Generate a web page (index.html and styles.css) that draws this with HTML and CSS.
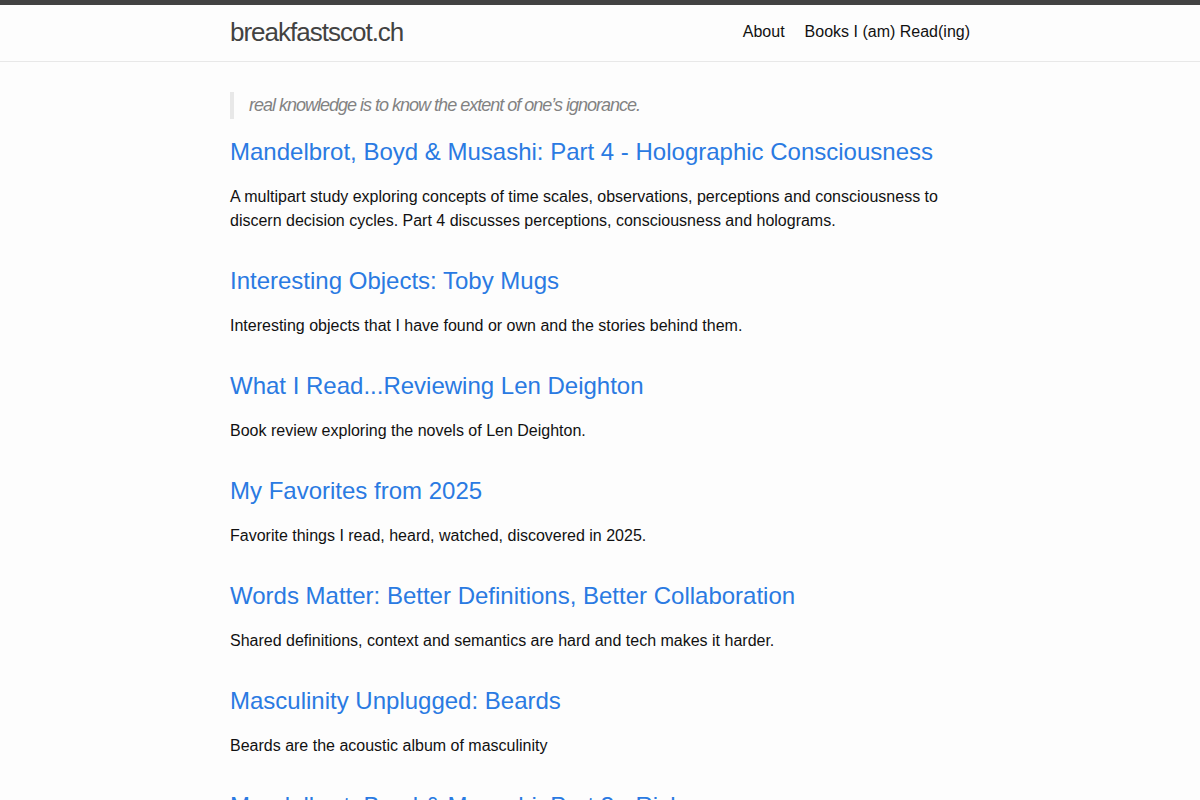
FILE: index.html
```html
<!DOCTYPE html>
<html lang="en">
<head>
    <meta charset="UTF-8">
    <title>breakfastscot.ch</title>
    <link rel="stylesheet" href="styles.css">
</head>
<body>
<header class="site-header">
    <div class="wrapper header-row">
        <a class="site-title" href="#">breakfastscot.ch</a>
        <nav class="site-nav">
            <a class="page-link" href="#">About</a>
            <a class="page-link" href="#">Books I (am) Read(ing)</a>
        </nav>
    </div>
</header>

<main class="page-content">
    <div class="wrapper">
        <blockquote>real knowledge is to know the extent of one’s ignorance.</blockquote>

        <ul class="post-list">
            <li>
                <h2><a class="post-link" href="#">Mandelbrot, Boyd &amp; Musashi: Part 4 - Holographic Consciousness</a></h2>
                <p>A multipart study exploring concepts of time scales, observations, perceptions and consciousness to discern decision cycles. Part 4 discusses perceptions, consciousness and holograms.</p>
            </li>
            <li>
                <h2><a class="post-link" href="#">Interesting Objects: Toby Mugs</a></h2>
                <p>Interesting objects that I have found or own and the stories behind them.</p>
            </li>
            <li>
                <h2><a class="post-link" href="#">What I Read...Reviewing Len Deighton</a></h2>
                <p>Book review exploring the novels of Len Deighton.</p>
            </li>
            <li>
                <h2><a class="post-link" href="#">My Favorites from 2025</a></h2>
                <p>Favorite things I read, heard, watched, discovered in 2025.</p>
            </li>
            <li>
                <h2><a class="post-link" href="#">Words Matter: Better Definitions, Better Collaboration</a></h2>
                <p>Shared definitions, context and semantics are hard and tech makes it harder.</p>
            </li>
            <li>
                <h2><a class="post-link" href="#">Masculinity Unplugged: Beards</a></h2>
                <p>Beards are the acoustic album of masculinity</p>
            </li>
            <li>
                <h2><a class="post-link" href="#">Mandelbrot, Boyd &amp; Musashi: Part 3 - Risk</a></h2>
                <p>A multipart study exploring concepts of time scales, observations, perceptions and consciousness to discern decision cycles. Part 3 discusses risk.</p>
            </li>
        </ul>
    </div>
</main>
</body>
</html>
```

FILE: styles.css
```css
body {
    margin: 0;
    padding: 0;
    background: #fdfdfd;
    color: #111;
    font: 16px/1.5 "Helvetica Neue", Helvetica, "Liberation Sans", Arial, sans-serif;
}

a {
    text-decoration: none;
}

.wrapper {
    max-width: 740px;
    margin: 0 auto;
}

/* header */
.site-header {
    border-top: 5px solid #424242;
    border-bottom: 1px solid #e8e8e8;
    min-height: 56px;
}

.header-row {
    display: flex;
    justify-content: space-between;
    align-items: center;
}

.site-title {
    font-size: 26px;
    font-weight: 300;
    line-height: 54px;
    letter-spacing: -1px;
    color: #424242;
}

.site-nav {
    display: flex;
    line-height: 54px;
}

.page-link {
    color: #111;
    margin-left: 20px;
}

/* content */
.page-content {
    padding: 30px 0;
}

blockquote {
    margin: 0 0 15px;
    padding-left: 15px;
    border-left: 4px solid #e8e8e8;
    color: #828282;
    font-size: 18px;
    font-style: italic;
    letter-spacing: -1px;
    line-height: 27px;
}

.post-list {
    list-style: none;
    margin: 0;
    padding: 0;
}

.post-list li {
    margin-bottom: 30px;
}

.post-list h2 {
    margin: 0 0 15px;
    font-size: 24px;
    font-weight: normal;
    line-height: 36px;
}

.post-link {
    color: #2a7ae2;
}

.post-list p {
    margin: 0;
}
```
